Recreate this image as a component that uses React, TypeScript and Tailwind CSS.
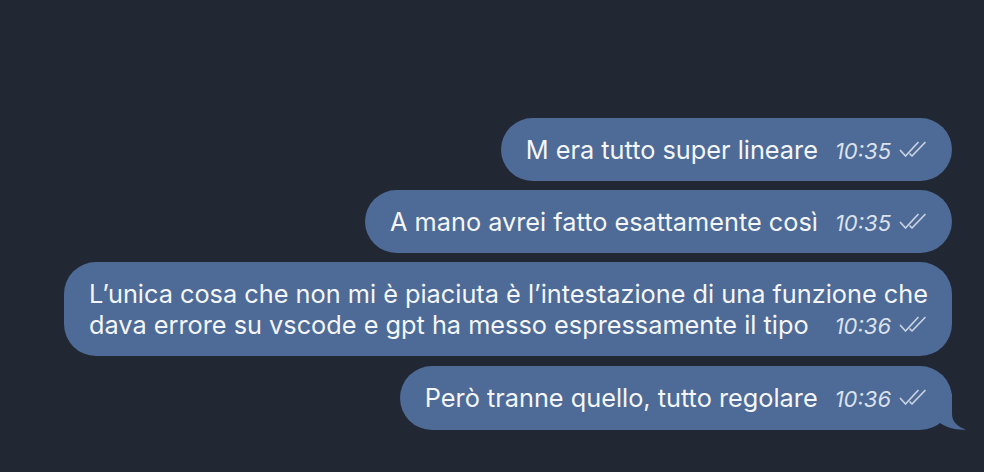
import React from "react";

function Checks() {
  return (
    <svg width="29" height="17" viewBox="0 0 29 17" fill="none" className="shrink-0">
      <path d="M1.5 9.5 L6.5 15 L19 1.5" stroke="#c9d3e2" strokeWidth="1.7" strokeLinecap="round" strokeLinejoin="round" />
      <path d="M11 13 L13 15 L26 1.5" stroke="#c9d3e2" strokeWidth="1.7" strokeLinecap="round" strokeLinejoin="round" />
    </svg>
  );
}

function Time({ t }: { t: string }) {
  return (
    <span className="flex items-center gap-[8px] shrink-0 ml-[17px] h-[31px] leading-none">
      <span className="italic text-[22px] leading-none text-[#dbe2ee] pt-[2px]">{t}</span>
      <Checks />
    </span>
  );
}

function Bubble({ lines, time, tail }: { lines: string[]; time: string; tail?: boolean }) {
  return (
    <div className={"relative self-end" + (tail ? " mt-[1px]" : "")}>
      <div
        className={
          "bg-[#4e6a96] rounded-[32px] pl-[25px] pr-[24px] text-[#f4f6fa] text-[25.3px] leading-[31px] " +
          (tail ? "pt-[16px] pb-[17px]" : "py-[16px]")
        }
      >
        {lines.slice(0, -1).map((l, i) => (
          <div key={i} className="whitespace-nowrap h-[31px]">{l}</div>
        ))}
        <div className="flex items-center h-[31px]">
          <span className="whitespace-nowrap">{lines[lines.length - 1]}</span>
          <span className="ml-auto" />
          <Time t={time} />
        </div>
      </div>
      {tail && (
        <svg width="34" height="36" viewBox="0 0 34 36" className="absolute right-[-14px] bottom-0">
          <path d="M20 0 L20 20 C20 28 26 33 34 35.5 C26 36.5 15 34 8 29 L0 0 Z" fill="#4e6a96" />
        </svg>
      )}
    </div>
  );
}

export default function App() {
  return (
    <div
      className="w-[984px] h-[472px] bg-[#212733] overflow-hidden flex flex-col gap-[9px] pt-[118px] pr-[32px]"
      style={{ fontFamily: "Inter, 'Noto Sans', sans-serif" }}
    >
      <Bubble lines={["M era tutto super lineare"]} time="10:35" />
      <Bubble lines={["A mano avrei fatto esattamente così"]} time="10:35" />
      <Bubble
        lines={[
          "L’unica cosa che non mi è piaciuta è l’intestazione di una funzione che",
          "dava errore su vscode e gpt ha messo espressamente il tipo",
        ]}
        time="10:36"
      />
      <Bubble lines={["Però tranne quello, tutto regolare"]} time="10:36" tail />
    </div>
  );
}
